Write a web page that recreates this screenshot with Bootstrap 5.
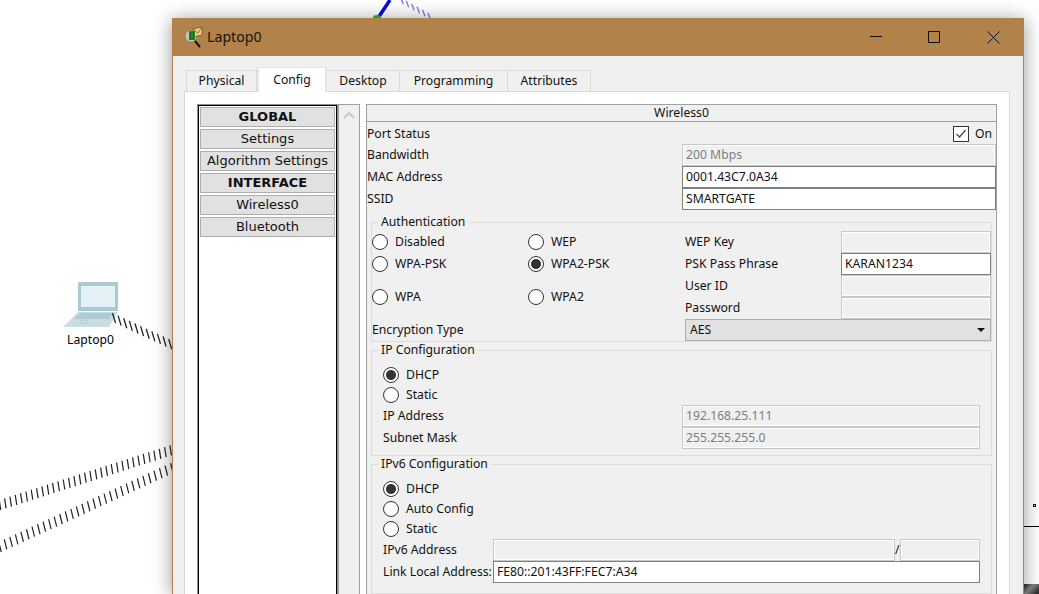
<!DOCTYPE html>
<html lang="en">
<head>
    <meta charset="UTF-8">
    <title>Laptop0</title>
    <link href="https://cdn.jsdelivr.net/npm/bootstrap@5.3.0/dist/css/bootstrap.min.css" rel="stylesheet">
    <style>
        body {
            background: #fff;
            color: #111;
            font-family: "Noto Sans", sans-serif;
            font-size: 12.2px;
            line-height: 14px;
            overflow: hidden;
            height: 594px;
        }

        /* workspace behind the window */
        .workspace { position: absolute; left: 0; top: 0; width: 1039px; height: 594px; }
        .node-label { position: absolute; left: 50px; top: 333px; width: 81px; text-align: center; color: #000; }

        /* window */
        .pt-window {
            position: absolute;
            left: 172px;
            top: 18px;
            width: 852px;
            height: 576px;
            overflow: hidden;
            background: #f0f0f0;
            border: solid #b1824a;
            border-width: 0 1px;
            box-shadow: 0 2px 18px rgba(0, 0, 0, .42);
        }
        .pt-title { height: 38px; background: #b1824a; padding-left: 11px; color: #1b1408; }
        .pt-title-text { font-size: 14.2px; margin-left: 3px; }
        .pt-controls { margin-left: auto; margin-right: 23px; }

        /* tabs */
        .pt-tabs { margin: 11px 0 0 13px; border: 0; height: 24px; align-items: flex-end; flex-wrap: nowrap; }
        .pt-tabs .nav-link {
            height: 22px;
            margin: 0 0 -1px;
            padding: 3px 0 0;
            text-align: center;
            color: #111;
            background: #f0f0f0;
            border: 1px solid #d9d9d9;
            border-left-width: 0;
            border-radius: 0;
        }
        .pt-tabs .nav-item:first-child .nav-link { border-left-width: 1px; }
        .pt-tabs .nav-link.active { height: 25px; padding-top: 5px; background: #fff; color: #111; border: 2px solid #e4e4e4; border-bottom: 0; border-top-width: 1px; position: relative; z-index: 1; }
        .tab-physical { width: 71px; }
        .tab-config { width: 70px; }
        .tab-desktop { width: 73px; }
        .tab-programming { width: 108px; }
        .tab-attributes { width: 83px; }

        .pt-pane { margin: 0 13px 0 11px; height: 520px; padding: 12px 12px 0; background: #fff; border: 1px solid #d9d9d9; border-bottom: 0; }

        /* left menu */
        .pt-menu { width: 141px; padding: 1px 1px 0; border: 2px solid #000; border-bottom: 0; outline: 1px solid #8f8f8f; outline-offset: -1px; background: #fff; }
        .pt-menu .btn {
            display: block;
            width: 100%;
            height: 20px;
            margin-bottom: 2px;
            padding: 0;
            font-family: "DejaVu Sans", sans-serif;
            font-size: 13px;
            line-height: 18px;
            color: #111;
            background: #e1e1e1;
            border: 1px solid #adadad;
            border-radius: 0;
        }
        .pt-menu .btn.head { font-weight: 700; }
        .pt-scroll { width: 22px; margin-right: 6px; background: #f0f0f0; border: 1px solid #a0a0a0; border-bottom: 0; }

        /* right form */
        .pt-form { width: 631px; background: #f0f0f0; border: 1px solid #a0a0a0; border-bottom: 0; }
        .pt-form-head { height: 17px; line-height: 16px; text-align: center; border-bottom: 1px solid #a0a0a0; margin-bottom: 1px; }
        .top-grid { display: grid; grid-template-columns: 315px 314px; grid-template-rows: 21px 22px 22px 22px; margin-bottom: 5px; }
        .port-row { margin-top: 1px; }
        .lbl { display: flex; align-items: center; white-space: nowrap; }

        .fld { height: 22px; padding: 0 3px; display: flex; align-items: center; white-space: nowrap; background: #fff; border: 1px solid #7f7f7f; }
        .fld.off { color: #7d7d7d; background: #f0f0f0; border-color: #c8c8c8; box-shadow: inset 0 0 0 1px #fff; }
        .fld-select { height: 22px; padding: 0 2px; display: flex; align-items: center; background: #e1e1e1; border: 1px solid #adadad; }
        .fld-select::after { content: ""; margin-left: auto; margin-right: 3px; border: solid transparent; border-width: 4px 4px 0; border-top-color: #111; }

        .pt-group { margin: 0 4px 1px; padding: 0; border: 1px solid #dcdcdc; }
        .pt-group legend { float: none; width: auto; margin: 0 0 0 6px; padding: 0 3px; font-size: 12.2px; line-height: 14px; }

        .auth-grid { display: grid; grid-template-columns: 156px 157px 156px 150px; grid-auto-rows: 22px; margin-top: 2px; }
        .span-2 { grid-row: span 2; }
        .col-all-2 { grid-column: span 2; }
        .col-all-3 { grid-column: span 3; }

        .ip-grid { display: grid; grid-template-columns: 299px 298px; grid-auto-rows: 22px; padding-left: 11px; margin-bottom: 6px; }
        .ip6-grid { display: grid; grid-template-columns: 110px 402px 5px 80px; grid-auto-rows: 22px; padding-left: 11px; margin-bottom: 10px; }
        .radio-row { height: 20px; padding-left: 11px; }
        .first-row { margin-top: 8px; }

        .rad {
            appearance: none;
            flex: none;
            width: 16px;
            height: 16px;
            margin: 0 7px 0 0;
            background: #fff;
            border: 1px solid #333;
            border-radius: 50%;
        }
        .rad:checked { background: radial-gradient(circle, #333 0 4.5px, #fff 5.5px); }
        .chk { width: 16px; height: 16px; margin-right: 6px; display: block; }
    </style>
</head>
<body>
    <!-- Cables and devices behind the window -->
    <div class="workspace">
        <svg id="cables" width="1039" height="594">
            <defs>
                <linearGradient id="darkbar" x1="0" x2="1" y1="0" y2="0.6">
                    <stop offset="0" stop-color="#222"/>
                    <stop offset=".5" stop-color="#888"/>
                    <stop offset="1" stop-color="#333"/>
                </linearGradient>
            </defs>
            <line x1="378" y1="18" x2="390" y2="0" stroke="#0a0ae0" stroke-width="3.5"/>
            <ellipse cx="377" cy="17" rx="4" ry="2" fill="#2fc02f"/>
            <g>
                <path d="M79 282h39v29H78V283z" fill="#abc9d3"/>
                <path d="M81 286h34v21H81z" fill="#e4f1f7"/>
                <path d="M63 327L78 312H118L109 327Z" fill="#c9dde3"/>
                <path d="M74 319L80 313H113L109 319Z" fill="#aecbd4"/>
                <ellipse cx="84" cy="322" rx="4" ry="2" fill="none" stroke="#aecbd4"/>
            </g>
            <rect x="1033.5" y="504.5" width="2" height="2" fill="#fff" stroke="#000"/>
            <line x1="1024" y1="526.5" x2="1039" y2="526.5" stroke="#000"/>
            <rect x="1024" y="584" width="15" height="10" fill="url(#darkbar)"/>
        </svg>
        <div class="node-label">Laptop0</div>
    </div>

    <div class="pt-window">
        <div class="pt-title d-flex align-items-center">
            <svg width="20" height="22" viewBox="0 0 20 22">
                <circle cx="7" cy="10" r="6" fill="#c9c2ae" stroke="#8b8674"/>
                <path d="M11 15l5 6" stroke="#111" stroke-width="2"/>
                <path d="M9 3l9-2v8l-9 2z" fill="#ecd27a" stroke="#5c4a1c" stroke-width=".7"/>
                <path d="M9 3l5 4 4-6" fill="none" stroke="#5c4a1c" stroke-width=".7"/>
                <path d="M5 5h6v9H5z" fill="#1c8a2a"/>
                <path d="M6 7h1M9 7h1M6 10h1M9 10h1M6 12.500h1M9 12.500h1" stroke="#073d0f"/>
            </svg>
            <span class="pt-title-text">Laptop0</span>
            <svg class="pt-controls" width="130" height="38" viewBox="0 0 130 38">
                <path d="M0 18.500H12" stroke="#111"/>
                <path d="M58.500 13.500h11v11h-11z" fill="none" stroke="#111"/>
                <path d="M117.500 13.500l12 12M129.500 13.500l-12 12" stroke="#111"/>
            </svg>
        </div>

        <ul class="nav nav-tabs pt-tabs">
            <li class="nav-item"><a class="nav-link tab-physical">Physical</a></li>
            <li class="nav-item"><a class="nav-link active tab-config">Config</a></li>
            <li class="nav-item"><a class="nav-link tab-desktop">Desktop</a></li>
            <li class="nav-item"><a class="nav-link tab-programming">Programming</a></li>
            <li class="nav-item"><a class="nav-link tab-attributes">Attributes</a></li>
        </ul>

        <div class="pt-pane d-flex">
            <div class="pt-menu">
                <button class="btn head">GLOBAL</button>
                <button class="btn">Settings</button>
                <button class="btn">Algorithm Settings</button>
                <button class="btn head">INTERFACE</button>
                <button class="btn">Wireless0</button>
                <button class="btn">Bluetooth</button>
            </div>
            <div class="pt-scroll text-center">
                <svg width="14" height="9" viewBox="0 0 14 9" class="mt-1"><path d="M2 8l5-5 5 5" fill="none" stroke="#c8c8c8" stroke-width="2"/></svg>
            </div>

            <div class="pt-form">
                <div class="pt-form-head">Wireless0</div>
                <div class="top-grid">
                    <div class="lbl port-row">Port Status</div>
                    <div class="lbl justify-content-end port-row">
                        <svg class="chk" viewBox="0 0 16 16"><rect x=".5" y=".5" width="15" height="15" fill="#fff" stroke="#333"/><path d="M3.500 8l3 3 6-7" fill="none" stroke="#444" stroke-width="1.200"/></svg>
                        <span class="me-1">On</span>
                    </div>
                    <div class="lbl">Bandwidth</div>
                    <div class="fld off">200 Mbps</div>
                    <div class="lbl">MAC Address</div>
                    <div class="fld">0001.43C7.0A34</div>
                    <div class="lbl">SSID</div>
                    <div class="fld">SMARTGATE</div>
                </div>

                <fieldset class="pt-group">
                    <legend>Authentication</legend>
                    <div class="auth-grid">
                        <label class="lbl"><input class="rad" type="radio">Disabled</label>
                        <label class="lbl"><input class="rad" type="radio">WEP</label>
                        <div class="lbl">WEP Key</div>
                        <div class="fld off"></div>
                        <label class="lbl"><input class="rad" type="radio">WPA-PSK</label>
                        <label class="lbl"><input class="rad" type="radio" checked>WPA2-PSK</label>
                        <div class="lbl">PSK Pass Phrase</div>
                        <div class="fld">KARAN1234</div>
                        <label class="lbl span-2"><input class="rad" type="radio">WPA</label>
                        <label class="lbl span-2"><input class="rad" type="radio">WPA2</label>
                        <div class="lbl">User ID</div>
                        <div class="fld off"></div>
                        <div class="lbl">Password</div>
                        <div class="fld off"></div>
                        <div class="lbl col-all-2">Encryption Type</div>
                        <div class="fld-select col-all-2 ps-1">AES</div>
                    </div>
                </fieldset>

                <fieldset class="pt-group">
                    <legend>IP Configuration</legend>
                    <label class="lbl radio-row first-row"><input class="rad" type="radio" checked>DHCP</label>
                    <label class="lbl radio-row"><input class="rad" type="radio">Static</label>
                    <div class="ip-grid">
                        <div class="lbl">IP Address</div>
                        <div class="fld off">192.168.25.111</div>
                        <div class="lbl">Subnet Mask</div>
                        <div class="fld off">255.255.255.0</div>
                    </div>
                </fieldset>

                <fieldset class="pt-group">
                    <legend>IPv6 Configuration</legend>
                    <label class="lbl radio-row first-row"><input class="rad" type="radio" checked>DHCP</label>
                    <label class="lbl radio-row"><input class="rad" type="radio">Auto Config</label>
                    <label class="lbl radio-row"><input class="rad" type="radio">Static</label>
                    <div class="ip6-grid">
                        <div class="lbl">IPv6 Address</div>
                        <div class="fld off"></div>
                        <div class="lbl">/</div>
                        <div class="fld off"></div>
                        <div class="lbl">Link Local Address:</div>
                        <div class="fld col-all-3">FE80::201:43FF:FEC7:A34</div>
                    </div>
                </fieldset>
            </div>
        </div>
    </div>

    <script src="https://cdn.jsdelivr.net/npm/bootstrap@5.3.0/dist/js/bootstrap.bundle.min.js"></script>
    <script>
        // x1, y1, x2, y2, tick dx, tick dy, spacing, width, colour
        const CABLES = [
            [0, 505, 172, 450, 1.5, 10, 5.6, 1.2, '#222'],
            [0, 547, 172, 468, 2.5, 10, 6.1, 1.2, '#222'],
            [114, 318, 172, 345, 3, 10, 6.2, 1.3, '#222'],
            [402, 1, 433, 18, 2.5, 6.5, 6.2, 1.4, '#7d7df0']
        ];
        const svg = document.getElementById('cables');

        CABLES.forEach(([x1, y1, x2, y2, dx, dy, gap, width, colour]) => {
            const len = Math.hypot(x2 - x1, y2 - y1);
            for (let d = 0; d <= len; d += gap) {
                const cx = x1 + (x2 - x1) * d / len;
                const cy = y1 + (y2 - y1) * d / len;
                const tick = document.createElementNS('http://www.w3.org/2000/svg', 'line');
                tick.setAttribute('x1', cx - dx / 2);
                tick.setAttribute('y1', cy - dy / 2);
                tick.setAttribute('x2', cx + dx / 2);
                tick.setAttribute('y2', cy + dy / 2);
                tick.setAttribute('stroke', colour);
                tick.setAttribute('stroke-width', width);
                svg.appendChild(tick);
            }
        });
    </script>
</body>
</html>
